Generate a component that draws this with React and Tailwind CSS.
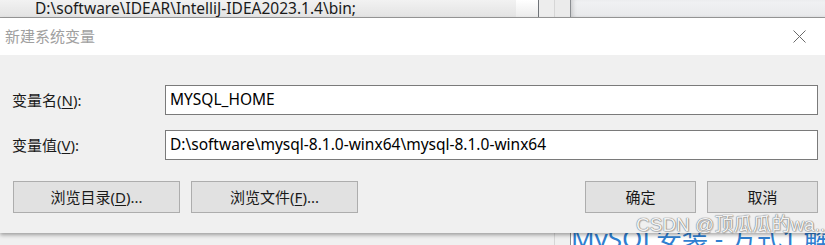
import React from 'react';

const font = { fontFamily: '"Noto Sans", "Noto Sans CJK SC", sans-serif' };

function WinButton({ children, className = '' }) {
  return (
    <button
      className={`h-[32px] border border-[#adadad] bg-[#e1e1e1] text-[15px] text-[#1a1a1a] flex items-center justify-center ${className}`}
    >
      {children}
    </button>
  );
}

function Field({ label, hotkey, value }) {
  return (
    <div className="flex items-center">
      <label className="w-[165px] pl-[12px] text-[15px] text-[#1a1a1a]">
        {label}(<span className="underline underline-offset-2">{hotkey}</span>):
      </label>
      <div className="w-[653px] h-[30px] border border-[#7a7a7a] bg-white flex items-center pl-[4px] text-[15.5px] text-black">
        {value}
      </div>
    </div>
  );
}

export default function App() {
  return (
    <div className="w-[825px] h-[245px] overflow-hidden bg-[#f0f0f0] relative flex flex-col" style={font}>
      {/* background window row */}
      <div className="h-[18px] flex shrink-0 border-b border-[#9a9a9a]">
        <div className="w-[516px] bg-gradient-to-b from-[#f2f2f2] to-[#e3e3e3] pl-[35px] text-[15.5px] leading-[16px] text-[#1a1a1a] overflow-hidden whitespace-nowrap">
          D:\software\IDEAR\IntelliJ-IDEA2023.1.4\bin;
        </div>
        <div className="w-[22px] bg-gradient-to-b from-[#ffffff] to-[#ececec]" />
        <div className="w-[16px] border-l border-[#6f7378] bg-[#ededed]" />
        <div className="w-[16px] border-l border-[#d6d6d6] bg-[#ebebeb]" />
        <div className="flex-1 border-l border-[#8a8d91] bg-gradient-to-b from-[#f1f2f4] to-[#e8e9eb] shadow-[inset_4px_0_4px_-2px_rgba(0,0,0,0.15)]" />
      </div>

      {/* dialog */}
      <div className="h-[215px] shrink-0 bg-[#f0f0f0] flex flex-col shadow-[0_2px_4px_rgba(0,0,0,0.35)] relative z-10">
        <div className="h-[37px] bg-white flex items-center justify-between pl-[5px] pr-[19px]">
          <span className="text-[15px] text-[#a0a0a0]">新建系统变量</span>
          <svg width="13" height="13" viewBox="0 0 13 13" className="text-[#6a6a6a]">
            <path d="M0.5 0.5 L12.5 12.5 M12.5 0.5 L0.5 12.5" stroke="currentColor" strokeWidth="1" />
          </svg>
        </div>
        <div className="pt-[30px] flex flex-col gap-[15px]">
          <Field label="变量名" hotkey="N" value="MYSQL_HOME" />
          <Field label="变量值" hotkey="V" value="D:\software\mysql-8.1.0-winx64\mysql-8.1.0-winx64" />
        </div>
        <div className="mt-[21px] flex pl-[13px] pr-[7px]">
          <WinButton className="w-[167px]">浏览目录(<span className="underline underline-offset-2">D</span>)...</WinButton>
          <WinButton className="w-[167px] ml-[11px]">浏览文件(<span className="underline underline-offset-2">F</span>)...</WinButton>
          <WinButton className="w-[111px] ml-auto">确定</WinButton>
          <WinButton className="w-[111px] ml-[11px]">取消</WinButton>
        </div>
      </div>

      {/* background window bottom */}
      <div className="flex-1 flex">
        <div className="w-[554px] bg-[#f0f0f0]" />
        <div className="w-[16px] border-l border-[#d6d6d6] bg-[#f0f0f0]" />
        <div className="flex-1 border-l border-[#8a8d91] bg-white relative overflow-hidden">
          <span className="absolute left-[0px] top-[-11px] text-[26px] leading-[32px] text-[#2f7fd1] whitespace-nowrap">
            MySQL安装 - 方式1 解压版
          </span>
        </div>
      </div>

      {/* watermark */}
      <span
        className="absolute left-[636px] top-[212px] z-20 text-[19px] leading-[26px] text-[#f2f2f2] whitespace-nowrap"
        style={{
          fontFamily: '"Liberation Sans", "Noto Sans CJK SC", sans-serif',
          textShadow: '0 0 1px #6f6f6f, 0 0 1px #6f6f6f, 1px 1px 1px rgba(0,0,0,0.2)',
        }}
      >
        CSDN @顶瓜瓜的wa..
      </span>
    </div>
  );
}
